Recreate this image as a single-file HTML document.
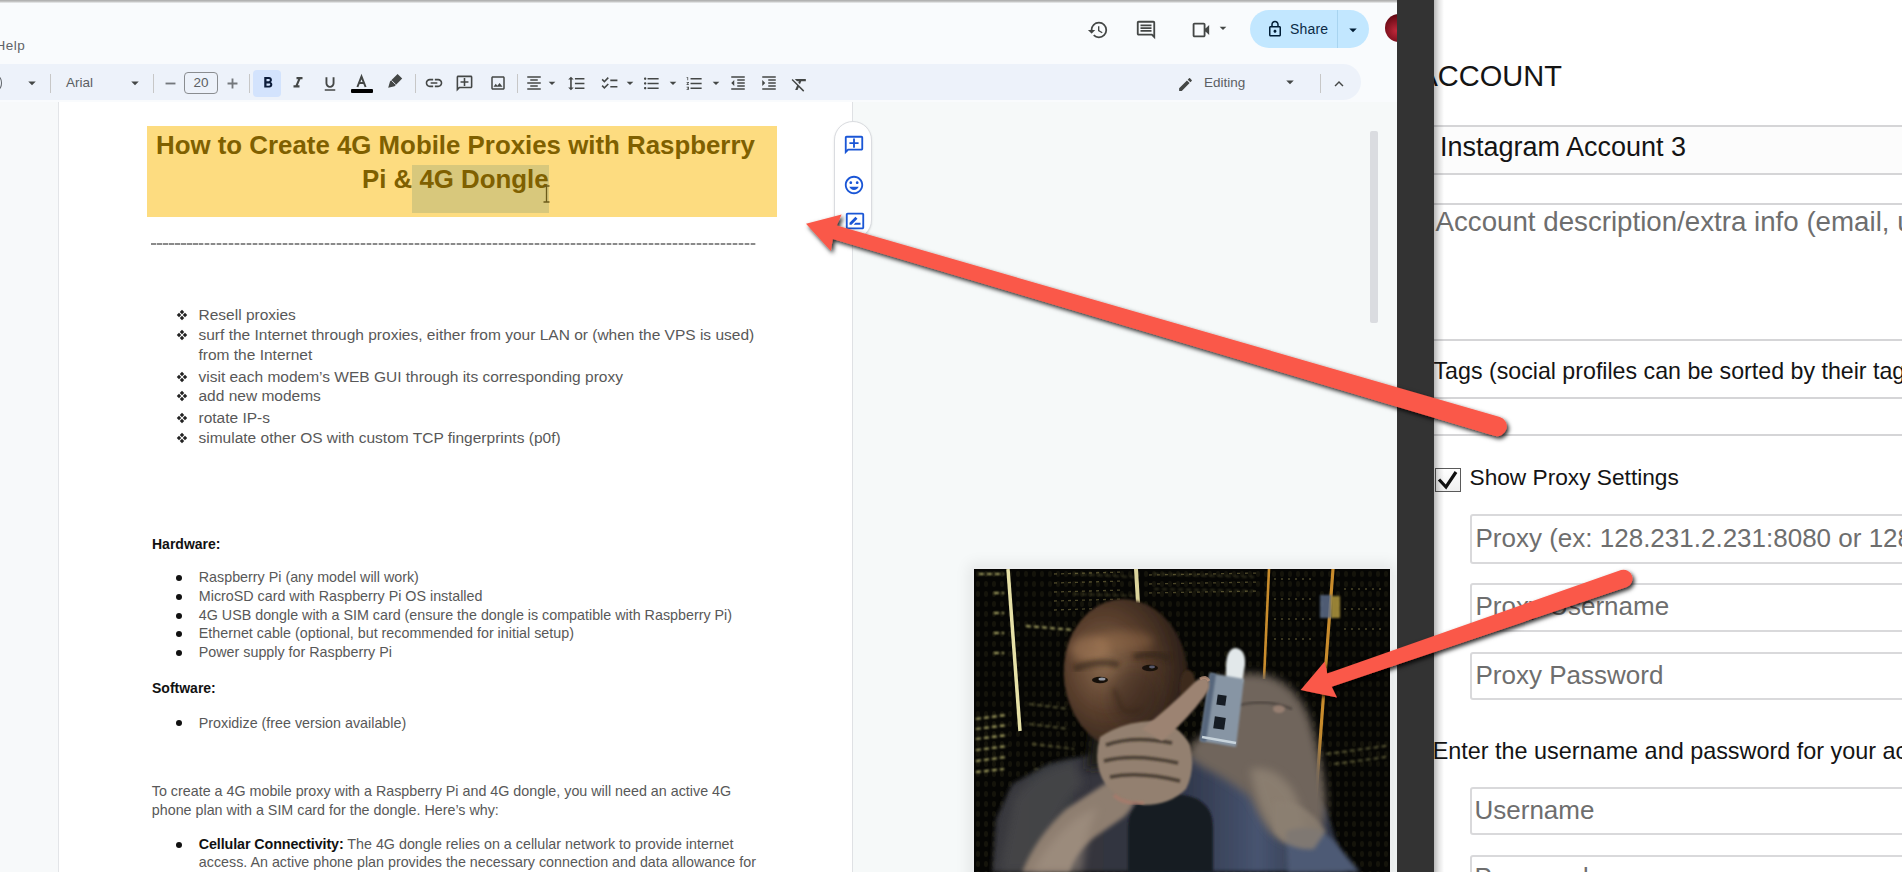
<!DOCTYPE html>
<html><head><meta charset="utf-8">
<style>
*{box-sizing:border-box;margin:0;padding:0}
html,body{width:1902px;height:872px;overflow:hidden;background:#f9fbfd;font-family:"Liberation Sans",sans-serif;position:relative}
.a{position:absolute;white-space:nowrap;line-height:1}
#topline{left:0;top:0;width:1397px;height:3px;background:linear-gradient(#a9a9a9,#c4c4c4 50%,#eef0f2)}
#toolbar{left:-30px;top:64px;width:1391px;height:36px;background:#edf2fa;border-radius:19px}
#page{left:58px;top:102px;width:795px;height:780px;background:#fff;border-left:1px solid #e3e5e8;border-right:1px solid #dfe1e4}
.doc{color:#585858;font-size:15px;letter-spacing:0}
.b1{font-size:15.8px;letter-spacing:-0.3px}
#darkbar{left:1397px;top:0;width:37px;height:872px;background:#333333}
#rshadow{left:1434px;top:0;width:10px;height:872px;background:linear-gradient(90deg,rgba(0,0,0,.28),rgba(0,0,0,.1) 50%,rgba(0,0,0,0))}
#rpanel{left:1434px;top:0;width:468px;height:872px;background:#fff}
.rp{font-size:25px;color:#111}
.hr{position:absolute;left:1434px;width:468px;height:2px;background:#d5d5d7}
.inp{position:absolute;left:1470px;width:440px;border:2px solid #d9d9db;border-radius:3px;background:#fff}
.dot{width:6px;height:6px;border-radius:50%;background:#111}
.sep{top:74px;width:1px;height:19px;background:#c7c7c7}
.ph{color:#737373}
</style></head><body>
<svg width="0" height="0" style="position:absolute"><defs>
<g id="dia" fill="#222"><path d="M6 0.8L8.2 3 6 5.2 3.8 3Z"/><path d="M6 6.8L8.2 9 6 11.2 3.8 9Z"/><path d="M3 3.8L5.2 6 3 8.2 0.8 6Z"/><path d="M9 3.8L11.2 6 9 8.2 6.8 6Z"/></g>
</defs></svg>
<div id="topline" class="a"></div>
<div class="a" style="left:-4.5px;top:38.5px;font-size:13.5px;letter-spacing:0.5px;color:#5f6368">Help</div>
<div id="toolbar" class="a"></div>
<div class="a" style="left:853px;top:102px;width:544px;height:770px;background:#f6f9f9"></div>
<div class="a" style="left:0;top:102px;width:58px;height:770px;background:#f7f9fa"></div>
<div id="page" class="a"></div>
<div class="a" style="left:-6px;top:76px;width:8px;height:14px;border:1.5px solid #5f6368;border-radius:50%"></div>
<svg class="a" style="left:22.5px;top:74.0px" width="18" height="18" viewBox="0 0 24 24"><path fill="#444746" d="M7 10l5 5 5-5z"/></svg>
<div class="a sep" style="left:50px"></div>
<div class="a" style="left:66px;top:76px;font-size:13.5px;color:#5b5f63;line-height:14px">Arial</div>
<svg class="a" style="left:126.0px;top:74.0px" width="18" height="18" viewBox="0 0 24 24"><path fill="#444746" d="M7 10l5 5 5-5z"/></svg>
<div class="a sep" style="left:153px"></div>
<svg class="a" style="left:161.5px;top:74.5px" width="17" height="17" viewBox="0 0 24 24"><path fill="#74787c" d="M19 13.3H5v-2.6h14v2.6z"/></svg>
<div class="a" style="left:184px;top:72px;width:34px;height:22px;border:1px solid #8a8d90;border-radius:4px;font-size:13.5px;color:#5b5f63;text-align:center;line-height:20px">20</div>
<svg class="a" style="left:223.5px;top:74.5px" width="17" height="17" viewBox="0 0 24 24"><path fill="#74787c" d="M19 13.3h-5.7v5.7h-2.6v-5.7H5v-2.6h5.7V5h2.6v5.7H19v2.6z"/></svg>
<div class="a sep" style="left:249px"></div>
<div class="a" style="left:253px;top:70px;width:28px;height:27px;background:#d3e3fd;border-radius:4px"></div>
<svg class="a" style="left:258.5px;top:74.0px" width="18" height="18" viewBox="0 0 24 24"><path fill="#0b1b3a" d="M15.6 10.79c.97-.67 1.65-1.77 1.65-2.79 0-2.26-1.75-4-4-4H7v14h7.04c2.09 0 3.71-1.7 3.71-3.79 0-1.52-.86-2.82-2.15-3.42zM10 6.5h3c.83 0 1.5.67 1.5 1.5s-.67 1.5-1.5 1.5h-3v-3zm3.5 9H10v-3h3.5c.83 0 1.5.67 1.5 1.5s-.67 1.5-1.5 1.5z"/></svg>
<svg class="a" style="left:289.0px;top:74.0px" width="18" height="18" viewBox="0 0 24 24"><path fill="#444746" d="M10 4v3h2.21l-3.42 8H6v3h8v-3h-2.21l3.42-8H18V4z"/></svg>
<svg class="a" style="left:320.5px;top:75.0px" width="18" height="18" viewBox="0 0 24 24"><path fill="#444746" d="M12 17c3.31 0 6-2.69 6-6V3h-2.5v8c0 1.93-1.57 3.5-3.5 3.5S8.5 12.93 8.5 11V3H6v8c0 3.31 2.69 6 6 6zm-7 2v2h14v-2H5z"/></svg>

<svg class="a" style="left:340px;top:66px" width="70" height="30" viewBox="340 66 70 30"><path d="M357.4,87 L361.5,76.6 L365.6,87 M359.2,83 L363.8,83" stroke="#444746" stroke-width="2" fill="none" stroke-linejoin="miter"/><path d="M397.6,74 L402.2,78.6 L394.6,86.2 L390,81.6 Z M390,81.6 L394.6,86.2 L388.2,87.8 Z" fill="#444746"/><path d="M391.5,80.4 L395.8,84.7" stroke="#edf2fa" stroke-width="0.9"/></svg>
<div class="a" style="left:351px;top:89px;width:21.5px;height:3.8px;background:#000;border-radius:1px"></div>

<div class="a sep" style="left:415px"></div>
<svg class="a" style="left:423.5px;top:73.0px" width="20" height="20" viewBox="0 0 24 24"><path fill="#444746" d="M3.9 12c0-1.71 1.39-3.1 3.1-3.1h4V7H7c-2.76 0-5 2.24-5 5s2.24 5 5 5h4v-1.9H7c-1.71 0-3.1-1.39-3.1-3.1zM8 13h8v-2H8v2zm9-6h-4v1.9h4c1.71 0 3.1 1.39 3.1 3.1s-1.39 3.1-3.1 3.1h-4V17h4c2.76 0 5-2.24 5-5s-2.24-5-5-5z"/></svg>
<svg class="a" style="left:455.0px;top:73.5px" width="19" height="19" viewBox="0 0 24 24"><path fill="#444746" d="M22 4c0-1.1-.9-2-2-2H4c-1.1 0-1.99.9-1.99 2L2 22l4-4h14c1.1 0 2-.9 2-2V4zm-2 12H5.17L4 17.17V4h16v12zM11 5h2v4h4v2h-4v4h-2v-4H7V9h4z"/></svg>
<svg class="a" style="left:488.5px;top:74.0px" width="18" height="18" viewBox="0 0 24 24"><path fill="#444746" d="M19 5v14H5V5h14m0-2H5c-1.1 0-2 .9-2 2v14c0 1.1.9 2 2 2h14c1.1 0 2-.9 2-2V5c0-1.1-.9-2-2-2zm-4.86 8.86l-3 3.87L9 13.14 6 17h12l-3.86-5.14z"/></svg>
<div class="a sep" style="left:517px"></div>
<svg class="a" style="left:524.5px;top:74.0px" width="18" height="18" viewBox="0 0 24 24"><path fill="#444746" d="M7 15v2h10v-2H7zm-4 6h18v-2H3v2zm0-8h18v-2H3v2zm4-6v2h10V7H7zM3 3v2h18V3H3z"/></svg>
<svg class="a" style="left:544.0px;top:75.0px" width="16" height="16" viewBox="0 0 24 24"><path fill="#444746" d="M7 10l5 5 5-5z"/></svg>
<svg class="a" style="left:567.0px;top:73.5px" width="19" height="19" viewBox="0 0 24 24"><path fill="#444746" d="M6 7h2.5L5 3.5 1.5 7H4v10H1.5L5 20.5 8.5 17H6V7zm4-2v2h12V5H10zm0 14h12v-2H10v2zm0-6h12v-2H10v2z"/></svg>
<svg class="a" style="left:600.0px;top:73.5px" width="19" height="19" viewBox="0 0 24 24"><path fill="#444746" d="M22 7h-9v2h9V7zm0 8h-9v2h9v-2zM5.54 11L2 7.46l1.41-1.41 2.12 2.12 4.24-4.24 1.41 1.41L5.54 11zm0 8L2 15.46l1.41-1.41 2.12 2.12 4.24-4.24 1.41 1.41L5.54 19z"/></svg>
<svg class="a" style="left:622.0px;top:75.0px" width="16" height="16" viewBox="0 0 24 24"><path fill="#444746" d="M7 10l5 5 5-5z"/></svg>
<svg class="a" style="left:642.0px;top:73.5px" width="19" height="19" viewBox="0 0 24 24"><path fill="#444746" d="M4 10.5c-.83 0-1.5.67-1.5 1.5s.67 1.5 1.5 1.5 1.5-.67 1.5-1.5-.67-1.5-1.5-1.5zm0-6c-.83 0-1.5.67-1.5 1.5S3.17 7.5 4 7.5 5.5 6.83 5.5 6 4.83 4.5 4 4.5zm0 12c-.83 0-1.5.68-1.5 1.5s.68 1.5 1.5 1.5 1.5-.68 1.5-1.5-.67-1.5-1.5-1.5zM7 19h14v-2H7v2zm0-6h14v-2H7v2zm0-8v2h14V5H7z"/></svg>
<svg class="a" style="left:665.0px;top:75.0px" width="16" height="16" viewBox="0 0 24 24"><path fill="#444746" d="M7 10l5 5 5-5z"/></svg>
<svg class="a" style="left:685.0px;top:73.5px" width="19" height="19" viewBox="0 0 24 24"><path fill="#444746" d="M2 17h2v.5H3v1h1v.5H2v1h3v-4H2v1zm1-9h1V4H2v1h1v3zm-1 3h1.8L2 13.1v.9h3v-1H3.2L5 10.9V10H2v1zm5-6v2h14V5H7zm0 14h14v-2H7v2zm0-6h14v-2H7v2z"/></svg>
<svg class="a" style="left:707.5px;top:75.0px" width="16" height="16" viewBox="0 0 24 24"><path fill="#444746" d="M7 10l5 5 5-5z"/></svg>
<svg class="a" style="left:728.5px;top:74.0px" width="18" height="18" viewBox="0 0 24 24"><path fill="#444746" d="M11 17h10v-2H11v2zm-8-5l4 4V8l-4 4zm0 9h18v-2H3v2zM3 3v2h18V3H3zm8 6h10V7H11v2zm0 4h10v-2H11v2z"/></svg>
<svg class="a" style="left:760.0px;top:74.0px" width="18" height="18" viewBox="0 0 24 24"><path fill="#444746" d="M3 21h18v-2H3v2zM3 8v8l4-4-4-4zm8 9h10v-2H11v2zM3 3v2h18V3H3zm8 6h10V7H11v2zm0 4h10v-2H11v2z"/></svg>
<svg class="a" style="left:790.0px;top:74.5px" width="19" height="19" viewBox="0 0 24 24"><path fill="#444746" d="M3.27 5L2 6.27l6.97 6.97L6.5 19h3l1.57-3.66L16.73 21 18 19.73 3.55 5.27 3.27 5zM6 5v.18L8.82 8h2.4l-.72 1.68 2.1 2.1L14.21 8H20V5H6z"/></svg>
<svg class="a" style="left:1176.5px;top:75.5px" width="17" height="17" viewBox="0 0 24 24"><path fill="#444746" d="M3 17.25V21h3.75L17.81 9.94l-3.75-3.75L3 17.25zM20.71 7.04a.996.996 0 0 0 0-1.41l-2.34-2.34a.996.996 0 0 0-1.41 0l-1.83 1.83 3.75 3.75 1.83-1.83z"/></svg>
<div class="a" style="left:1204px;top:76px;font-size:13.5px;color:#5b5f63;line-height:14px">Editing</div>
<svg class="a" style="left:1281.0px;top:73.0px" width="18" height="18" viewBox="0 0 24 24"><path fill="#444746" d="M7 10l5 5 5-5z"/></svg>
<div class="a sep" style="left:1320px"></div>
<svg class="a" style="left:1329.5px;top:75.0px" width="18" height="18" viewBox="0 0 24 24"><path fill="#444746" d="M12 8l-6 6 1.41 1.41L12 10.83l4.59 4.58L18 14z"/></svg>
<svg class="a" style="left:1086.5px;top:19.0px" width="22" height="22" viewBox="0 0 24 24"><path fill="#444746" d="M13 3a9 9 0 0 0-9 9H1l3.89 3.89.07.14L9 12H6c0-3.87 3.13-7 7-7s7 3.13 7 7-3.13 7-7 7c-1.93 0-3.68-.79-4.94-2.06l-1.42 1.42A8.954 8.954 0 0 0 13 21a9 9 0 0 0 0-18zm-1 5v5l4.28 2.54.72-1.21-3.5-2.08V8H12z"/></svg>
<svg class="a" style="left:1135.0px;top:19.0px" width="22" height="22" viewBox="0 0 24 24"><path fill="#444746" d="M21.99 4c0-1.1-.89-2-1.99-2H4c-1.1 0-2 .9-2 2v12c0 1.1.9 2 2 2h14l4 4-.01-18zM20 4v13.17L18.83 16H4V4h16zM6 12h12v2H6zm0-3h12v2H6zm0-3h12v2H6z"/></svg>
<svg class="a" style="left:1188.5px;top:19.0px" width="22" height="22" viewBox="0 0 24 24"><path fill="#444746" d="M18 10.48V6c0-1.1-.9-2-2-2H6c-1.1 0-2 .9-2 2v12c0 1.1.9 2 2 2h10c1.1 0 2-.9 2-2v-4.48l4 3.98v-11l-4 3.98zM16 18H6V6h10v12z"/></svg>
<svg class="a" style="left:1214.5px;top:20.0px" width="16" height="16" viewBox="0 0 24 24"><path fill="#444746" d="M7 10l5 5 5-5z"/></svg>
<div class="a" style="left:1250px;top:10px;width:119px;height:38px;background:#c2e7ff;border-radius:19px"></div>
<div class="a" style="left:1337px;top:10px;width:1px;height:38px;background:#a8d4f0"></div>
<svg class="a" style="left:1265.5px;top:20.0px" width="18" height="18" viewBox="0 0 24 24"><path fill="#001d35" d="M18 8h-1V6c0-2.76-2.24-5-5-5S7 3.24 7 6v2H6c-1.1 0-2 .9-2 2v10c0 1.1.9 2 2 2h12c1.1 0 2-.9 2-2V10c0-1.1-.9-2-2-2zM9 6c0-1.66 1.34-3 3-3s3 1.34 3 3v2H9V6zm9 14H6V10h12v10zm-6-3c1.1 0 2-.9 2-2s-.9-2-2-2-2 .9-2 2 .9 2 2 2z"/></svg>
<div class="a" style="left:1290px;top:22px;font-size:14px;color:#0b2a45;line-height:14px;font-weight:400;letter-spacing:0.2px">Share</div>
<svg class="a" style="left:1344.0px;top:21.0px" width="18" height="18" viewBox="0 0 24 24"><path fill="#001d35" d="M7 10l5 5 5-5z"/></svg>
<div class="a" style="left:1385px;top:14px;width:28px;height:28px;border-radius:50%;background:radial-gradient(circle at 40% 60%,#c0283a,#6a0a16 60%,#2a0508)"></div>

<!-- title -->
<div class="a" style="left:147px;top:126px;width:630px;height:91px;background:#fddc80"></div>
<div class="a" style="left:412px;top:165px;width:137px;height:48px;background:#d8c87c"></div>
<div class="a" style="left:156px;top:133px;font-size:25.85px;font-weight:700;color:#7f6000">How to Create 4G Mobile Proxies with Raspberry</div>
<div class="a" style="left:362px;top:167px;font-size:25.85px;font-weight:700;color:#7f6000">Pi &amp; 4G Dongle</div>

<div class="a" style="left:0;top:0;width:1902px;height:872px">
<!-- doc content -->
<div class="a" style="left:151px;top:243px;width:605px;height:1.5px;background:repeating-linear-gradient(90deg,#8a8a8a 0 4.5px,#d8d8d8 4.5px 6px)"></div>
<div class="a doc" style="left:198.5px;top:306.6px;font-size:15.5px;letter-spacing:0">Resell proxies</div>
<svg class="a" style="left:176px;top:308.6px" width="12" height="12" viewBox="0 0 12 12"><use href="#dia"/></svg>
<div class="a doc" style="left:198.5px;top:327.2px;font-size:15.5px;letter-spacing:0">surf the Internet through proxies, either from your LAN or (when the VPS is used)</div>
<svg class="a" style="left:176px;top:329.2px" width="12" height="12" viewBox="0 0 12 12"><use href="#dia"/></svg>
<div class="a doc" style="left:198.5px;top:347.0px;font-size:15.5px;letter-spacing:0">from the Internet</div>
<div class="a doc" style="left:198.5px;top:369.0px;font-size:15.5px;letter-spacing:0">visit each modem&#8217;s WEB GUI through its corresponding proxy</div>
<svg class="a" style="left:176px;top:371.0px" width="12" height="12" viewBox="0 0 12 12"><use href="#dia"/></svg>
<div class="a doc" style="left:198.5px;top:388.3px;font-size:15.5px;letter-spacing:0">add new modems</div>
<svg class="a" style="left:176px;top:390.3px" width="12" height="12" viewBox="0 0 12 12"><use href="#dia"/></svg>
<div class="a doc" style="left:198.5px;top:409.8px;font-size:15.5px;letter-spacing:0">rotate IP-s</div>
<svg class="a" style="left:176px;top:411.8px" width="12" height="12" viewBox="0 0 12 12"><use href="#dia"/></svg>
<div class="a doc" style="left:198.5px;top:429.9px;font-size:15.5px;letter-spacing:0">simulate other OS with custom TCP fingerprints (p0f)</div>
<svg class="a" style="left:176px;top:431.9px" width="12" height="12" viewBox="0 0 12 12"><use href="#dia"/></svg>
<div class="a doc" style="left:152px;top:536.5px;font-size:14px;font-weight:700;color:#111;letter-spacing:0">Hardware:</div>
<div class="a doc" style="left:198.8px;top:569.8px;font-size:14.3px;">Raspberry Pi (any model will work)</div>
<div class="a dot" style="left:176px;top:574.7px"></div>
<div class="a doc" style="left:198.8px;top:589.2px;font-size:14.3px;">MicroSD card with Raspberry Pi OS installed</div>
<div class="a dot" style="left:176px;top:594.1px"></div>
<div class="a doc" style="left:198.8px;top:608.0px;font-size:14.3px;">4G USB dongle with a SIM card (ensure the dongle is compatible with Raspberry Pi)</div>
<div class="a dot" style="left:176px;top:612.9px"></div>
<div class="a doc" style="left:198.8px;top:626.1px;font-size:14.3px;">Ethernet cable (optional, but recommended for initial setup)</div>
<div class="a dot" style="left:176px;top:631.0px"></div>
<div class="a doc" style="left:198.8px;top:645.3px;font-size:14.3px;">Power supply for Raspberry Pi</div>
<div class="a dot" style="left:176px;top:650.2px"></div>
<div class="a doc" style="left:152px;top:680.8px;font-size:14px;font-weight:700;color:#111;letter-spacing:0">Software:</div>
<div class="a doc" style="left:198.8px;top:715.5px;font-size:14.3px;">Proxidize (free version available)</div>
<div class="a dot" style="left:176px;top:720.4px"></div>
<div class="a doc" style="left:151.8px;top:784.0px;font-size:14.3px;">To create a 4G mobile proxy with a Raspberry Pi and 4G dongle, you will need an active 4G</div>
<div class="a doc" style="left:151.8px;top:803.2px;font-size:14.3px;">phone plan with a SIM card for the dongle. Here&#8217;s why:</div>
<div class="a doc" style="left:198.8px;top:836.8px;font-size:14.3px;"><b style="color:#111;letter-spacing:-0.1px">Cellular Connectivity:</b> The 4G dongle relies on a cellular network to provide internet</div>
<div class="a dot" style="left:176px;top:841.7px"></div>
<div class="a doc" style="left:198.8px;top:855.4px;font-size:14.3px;">access. An active phone plan provides the necessary connection and data allowance for</div>

</div>
<!-- scrollbar -->
<div class="a" style="left:1370px;top:131px;width:7.5px;height:192px;background:#dadce0;border-radius:2px"></div>
<!-- side pill -->
<div class="a" style="left:834px;top:121px;width:38px;height:118px;background:#fff;border:1px solid #dadce0;border-radius:19px;box-shadow:0 1px 2px rgba(60,64,67,.15)"></div>
<svg class="a" style="left:843px;top:134px" width="22" height="22" viewBox="0 0 24 24"><path fill="#1a56d6" d="M22 4c0-1.1-.9-2-2-2H4c-1.1 0-1.99.9-1.99 2L2 22l4-4h14c1.1 0 2-.9 2-2V4zm-2 12H5.17L4 17.17V4h16v12zM11 5h2v4h4v2h-4v4h-2v-4H7V9h4z"/></svg>
<svg class="a" style="left:843px;top:173.5px" width="22" height="22" viewBox="0 0 24 24"><path fill="#1a56d6" d="M11.99 2C6.47 2 2 6.48 2 12s4.47 10 9.99 10C17.52 22 22 17.52 22 12S17.52 2 11.99 2zM12 20c-4.42 0-8-3.58-8-8s3.58-8 8-8 8 3.58 8 8-3.58 8-8 8zm3.5-9c.83 0 1.5-.67 1.5-1.5S16.33 8 15.5 8 14 8.67 14 9.5s.67 1.5 1.5 1.5zm-7 0c.83 0 1.5-.67 1.5-1.5S9.33 8 8.5 8 7 8.67 7 9.5 7.67 11 8.5 11zm3.5 6.5c2.33 0 4.31-1.46 5.11-3.5H6.89c.8 2.04 2.78 3.5 5.11 3.5z"/></svg>
<svg class="a" style="left:843.5px;top:210px" width="22" height="22" viewBox="0 0 24 24"><path fill="#1a56d6" d="M20 3H4c-1.1 0-2 .9-2 2v14c0 1.1.9 2 2 2h16c1.1 0 2-.9 2-2V5c0-1.1-.9-2-2-2zm0 16H4V5h16v14zM6 16v-2.2l6.5-6.5 2.2 2.2L8.2 16H6zm12 0h-7.5l2-2H18v2z"/></svg>
<!-- I-beam cursor -->
<svg class="a" style="left:542px;top:185px" width="9" height="18" viewBox="0 0 9 18"><path d="M1.5 1H7.5M4.5 1V17M1.5 17H7.5" stroke="#6b5a1a" stroke-width="1.3" fill="none"/></svg>

<!-- webcam -->
<div class="a" style="left:971.5px;top:566.5px;width:420.5px;height:320px;background:#eceeef;box-shadow:0 0 14px 3px rgba(0,0,0,.08)"></div>
<svg class="a" style="left:974px;top:569px" width="416" height="303" viewBox="0 0 416 303">
<defs>
<filter id="bl1" x="-20%" y="-20%" width="140%" height="140%"><feGaussianBlur stdDeviation="1"/></filter>
<filter id="bl2" x="-20%" y="-20%" width="140%" height="140%"><feGaussianBlur stdDeviation="2"/></filter>
<filter id="bl4" x="-30%" y="-30%" width="160%" height="160%"><feGaussianBlur stdDeviation="4"/></filter>
<filter id="bl8" x="-30%" y="-30%" width="160%" height="160%"><feGaussianBlur stdDeviation="8"/></filter>
<pattern id="mesh" width="8" height="10" patternUnits="userSpaceOnUse"><rect width="8" height="10" fill="#060604"/><ellipse cx="4" cy="5" rx="2" ry="3" fill="#15140b"/></pattern>
<radialGradient id="skinHead" cx="0.35" cy="0.42" r="0.7"><stop offset="0" stop-color="#8a6a4e"/><stop offset="0.45" stop-color="#5a3f2d"/><stop offset="1" stop-color="#241a14"/></radialGradient>
<linearGradient id="shirt" x1="0" y1="0" x2="1" y2="0"><stop offset="0" stop-color="#38393d"/><stop offset="0.3" stop-color="#34363e"/><stop offset="0.5" stop-color="#2c3244"/><stop offset="0.75" stop-color="#475470"/><stop offset="1" stop-color="#2a2f3c"/></linearGradient>
<linearGradient id="arm" x1="0" y1="1" x2="1" y2="0"><stop offset="0" stop-color="#7c6c5e"/><stop offset="0.5" stop-color="#9a8a7a"/><stop offset="1" stop-color="#8a7060"/></linearGradient>
</defs>
<rect width="416" height="303" fill="url(#mesh)"/>
<g stroke="#d9d480" stroke-width="2" opacity="0.8" filter="url(#bl1)" stroke-dasharray="5 3">
<path d="M2 150 L32 146 M2 160 L34 156 M2 170 L34 166 M2 181 L34 177 M2 192 L32 188 M2 203 L30 200"/>
<path d="M52 57 L100 61 M5 5 L30 5 M20 24 L30 24 M20 44 L30 44 M20 64 L30 64 M20 84 L30 84"/>
<path d="M222 238 L262 232 M192 241 L218 239"/>
<path d="M352 185 L412 177 M360 195 L412 188" opacity="0.5"/>
<path d="M55 135 L95 140 M55 155 L95 160 M58 175 L100 180 M60 200 L100 205 M62 225 L100 228" opacity="0.45"/>
<path d="M100 5 L160 8 M100 25 L160 27 M180 5 L280 8 M180 20 L280 22" opacity="0.25"/>
</g>
<g stroke="#cfc070" stroke-width="1.3" opacity="0.35" fill="none">
<path d="M80 5 L150 3 M80 14 L150 12 M80 23 L150 21 M80 32 L150 30 M80 41 L140 39" stroke-dasharray="3 4"/>
<path d="M175 6 L285 4 M175 15 L285 13 M175 24 L285 22" stroke-dasharray="3 5"/>
<path d="M300 10 L340 10 M300 30 L340 30 M300 50 L340 50 M300 70 L340 70 M370 20 L412 20 M370 40 L412 40 M370 60 L412 60" stroke-dasharray="2 5"/>
</g>
<path d="M34 0 L46 162" stroke="#e8e2a8" stroke-width="3.5"/>
<path d="M162 0 L164 34" stroke="#dcd49c" stroke-width="4"/>
<path d="M295 0 L290 110" stroke="#c98c2c" stroke-width="2.6"/>
<path d="M359 0 L341 240" stroke="#c98c2c" stroke-width="3.2"/>
<rect x="346" y="26" width="12" height="23" fill="#5c6c88" opacity="0.85" filter="url(#bl1)"/>
<rect x="357" y="27" width="9" height="22" fill="#a8903a" opacity="0.9" filter="url(#bl1)"/>
<!-- shirt -->
<path d="M18 303 L22 250 L38 215 L75 195 L120 185 L180 182 L250 188 L320 205 L352 240 L372 303 Z" fill="url(#shirt)" filter="url(#bl2)"/>
<path d="M40 230 Q60 200 100 192 L110 215 Q80 240 70 303 L25 303 Z" fill="#46464a" opacity="0.8" filter="url(#bl4)"/>
<!-- neck shadow -->
<path d="M118 150 L200 150 L206 196 L112 200 Z" fill="#1e1a16" filter="url(#bl4)"/>
<!-- head -->
<ellipse cx="152" cy="106" rx="62" ry="76" fill="url(#skinHead)" transform="rotate(-6 152 106)" filter="url(#bl1)"/>
<ellipse cx="214" cy="118" rx="8" ry="17" fill="#3e2b1e" filter="url(#bl1)"/>
<ellipse cx="116" cy="80" rx="20" ry="13" fill="#b48660" opacity="0.45" filter="url(#bl4)"/>
<ellipse cx="150" cy="72" rx="30" ry="10" fill="#a87a52" opacity="0.35" filter="url(#bl4)"/>
<path d="M100 100 Q125 90 145 96 M160 88 Q180 82 196 90" stroke="#2e2016" stroke-width="7" fill="none" opacity="0.55" filter="url(#bl2)"/>
<ellipse cx="126" cy="111" rx="8" ry="3.2" fill="#16100a"/>
<ellipse cx="128" cy="110" rx="3.5" ry="1.5" fill="#c8d0e0" opacity="0.75"/>
<ellipse cx="176" cy="99" rx="8" ry="3.2" fill="#16100a"/>
<ellipse cx="178" cy="98" rx="3" ry="1.4" fill="#7a80a0" opacity="0.7"/>
<path d="M140 120 L148 140 Q156 146 166 140" stroke="#3a2618" stroke-width="4" fill="none" opacity="0.5" filter="url(#bl2)"/>
<ellipse cx="160" cy="128" rx="26" ry="30" fill="#2a1e16" opacity="0.35" filter="url(#bl8)"/>
<!-- right hand -->
<path d="M236 116 Q262 100 292 106 Q322 114 336 150 Q350 195 352 232 Q352 262 336 272 Q312 280 296 262 Q284 246 276 228 Q258 214 240 204 Q222 196 214 186 Q216 170 232 166 L250 170 Q246 140 236 116 Z" fill="#6f655b" filter="url(#bl4)"/>
<path d="M276 200 Q300 195 318 220 Q334 250 330 268 Q310 276 296 258 Q284 240 276 200 Z" fill="#958878" opacity="0.7" filter="url(#bl4)"/>
<path d="M258 138 Q290 128 318 140" stroke="#3a3430" stroke-width="2.5" fill="none" opacity="0.6" filter="url(#bl1)"/>
<ellipse cx="305" cy="140" rx="6" ry="4" fill="#b09080" opacity="0.6" filter="url(#bl1)"/>
<path d="M312 262 Q342 252 360 272 L386 303 L314 303 Z" fill="#4e5a74" filter="url(#bl2)"/>
<path d="M300 232 Q330 230 352 262 L340 280 Q312 282 300 262 Z" fill="#8c8072" opacity="0.8" filter="url(#bl2)"/>
<!-- dongle -->
<path d="M252 96 Q253 79 262 79 Q272 81 271 96 L268 114 L252 112 Z" fill="#e2e8ea" filter="url(#bl1)"/>
<path d="M236 104 L270 110 L262 178 L226 172 Z" fill="#8795a4" filter="url(#bl1)"/>
<path d="M236 104 L242 105 L232 173 L226 172 Z" fill="#56667c" filter="url(#bl1)"/>
<rect x="243" y="126" width="9" height="10" fill="#161c24" transform="rotate(8 247 131)"/>
<rect x="240" y="148" width="11" height="12" fill="#161c24" transform="rotate(8 245 154)"/>
<path d="M228 168 L262 174" stroke="#c8d4dc" stroke-width="2.5"/>
<!-- mic -->
<path d="M154 303 L154 258 Q154 225 196 225 Q239 225 239 258 L239 303 Z" fill="#181b24" filter="url(#bl1)"/>
<!-- left forearm -->
<path d="M48 303 Q62 268 92 240 L132 214 Q150 206 160 218 Q166 232 150 248 L118 270 Q100 286 96 303 Z" fill="#8e7e70" filter="url(#bl2)"/>
<path d="M58 303 Q75 270 104 248 L124 238 Q112 262 108 303 Z" fill="#a89888" opacity="0.5" filter="url(#bl4)"/>
<!-- left fist -->
<path d="M126 168 Q150 152 182 152 Q206 156 216 176 Q222 200 212 220 Q196 236 170 236 Q146 232 132 216 Q118 196 126 168 Z" fill="#93806f" filter="url(#bl1)"/>
<path d="M132 176 Q160 166 198 174 M130 192 Q160 184 204 194 M136 208 Q166 202 206 212" stroke="#2e261e" stroke-width="3.5" fill="none" opacity="0.7" filter="url(#bl1)"/>
<path d="M140 226 Q150 236 170 234" stroke="#b07a6a" stroke-width="4" fill="none" opacity="0.6" filter="url(#bl1)"/>
<!-- pointing finger -->
<path d="M168 160 Q196 138 222 112 Q230 106 234 110 Q238 118 230 128 Q212 152 188 172 Z" fill="#9c8372" filter="url(#bl1)"/>
<path d="M226 110 Q232 106 235 112" stroke="#c89c84" stroke-width="3" fill="none" opacity="0.7"/>
</svg>
<div id="rpanel" class="a"></div>
<div class="a" style="left:1418.5px;top:62.1px;font-size:29px;color:#141414;">ACCOUNT</div>
<div class="hr" style="top:125px"></div>
<div class="hr" style="top:172.6px"></div>
<div class="hr" style="top:203px"></div>
<div class="hr" style="top:338.5px"></div>
<div class="hr" style="top:396.8px"></div>
<div class="hr" style="top:433.7px"></div>
<div class="a" style="left:1434px;top:127px;width:468px;height:45.6px;background:#fcfcfc"></div>
<div class="a" style="left:1440px;top:133.6px;font-size:27px;color:#141414;">Instagram Account 3</div>
<div class="a" style="left:1435.5px;top:207.8px;font-size:27.7px;color:#6e6e6e;">Account description/extra info (email, u</div>
<div class="a" style="left:1433.5px;top:359.6px;font-size:23.2px;color:#141414;">Tags (social profiles can be sorted by their tags)</div>
<div class="a" style="left:1434.5px;top:467.5px;width:26.5px;height:24px;border:1.6px solid #5a5a5a;background:linear-gradient(#fff,#f0f0f0)"></div>
<svg class="a" style="left:1434px;top:467px" width="28" height="26" viewBox="0 0 28 26"><path d="M5 12.5 L12 20 L22 5" fill="none" stroke="#111" stroke-width="3.2" stroke-linejoin="miter"/></svg>
<div class="a" style="left:1469.5px;top:465.7px;font-size:22.7px;color:#141414;">Show Proxy Settings</div>
<div class="inp" style="top:514px;height:50px"></div>
<div class="inp" style="top:583px;height:49px"></div>
<div class="inp" style="top:651.5px;height:48.0px"></div>
<div class="a" style="left:1475.5px;top:524.5px;font-size:26px;color:#6e6e6e;">Proxy (ex: 128.231.2.231:8080 or 128.231.2.231:8080:user:pass)</div>
<div class="a" style="left:1475.5px;top:593.4px;font-size:26px;color:#6e6e6e;">Proxy Username</div>
<div class="a" style="left:1475.5px;top:661.5px;font-size:26px;color:#6e6e6e;">Proxy Password</div>
<div class="a" style="left:1432.7px;top:739.6px;font-size:23.4px;color:#141414;">Enter the username and password for your account</div>
<div class="inp" style="top:787px;height:47.5px"></div>
<div class="a" style="left:1474.5px;top:796.9px;font-size:26px;color:#6e6e6e;">Username</div>
<div class="inp" style="top:854.5px;height:47.5px"></div>
<div class="a" style="left:1474.5px;top:864.4px;font-size:26px;color:#6e6e6e;">Password</div>
<div id="darkbar" class="a"></div>
<div id="rshadow" class="a"></div>

<svg class="a" style="left:0;top:0" width="1902" height="872" viewBox="0 0 1902 872">
<defs><filter id="sh" x="-10%" y="-10%" width="120%" height="130%"><feDropShadow dx="2" dy="2.5" stdDeviation="2" flood-color="#000" flood-opacity="0.85"/></filter></defs>
<path filter="url(#sh)" fill="#fa5849" d="M806.0,223.8 L841.6,214.4 L836.8,225.5 L1499.8,416.9 A9.8,9.8 0 0 1 1494.2,435.7 L832.8,239.0 L830.9,250.9 Z"/>
<path filter="url(#sh)" fill="#fa5849" d="M1300.6,690.0 L1324.7,661.6 L1327.2,673.4 L1621.1,570.0 A9,9 0 0 1 1626.9,587.0 L1331.7,686.7 L1337.0,697.5 Z"/>
</svg>
</body></html>
